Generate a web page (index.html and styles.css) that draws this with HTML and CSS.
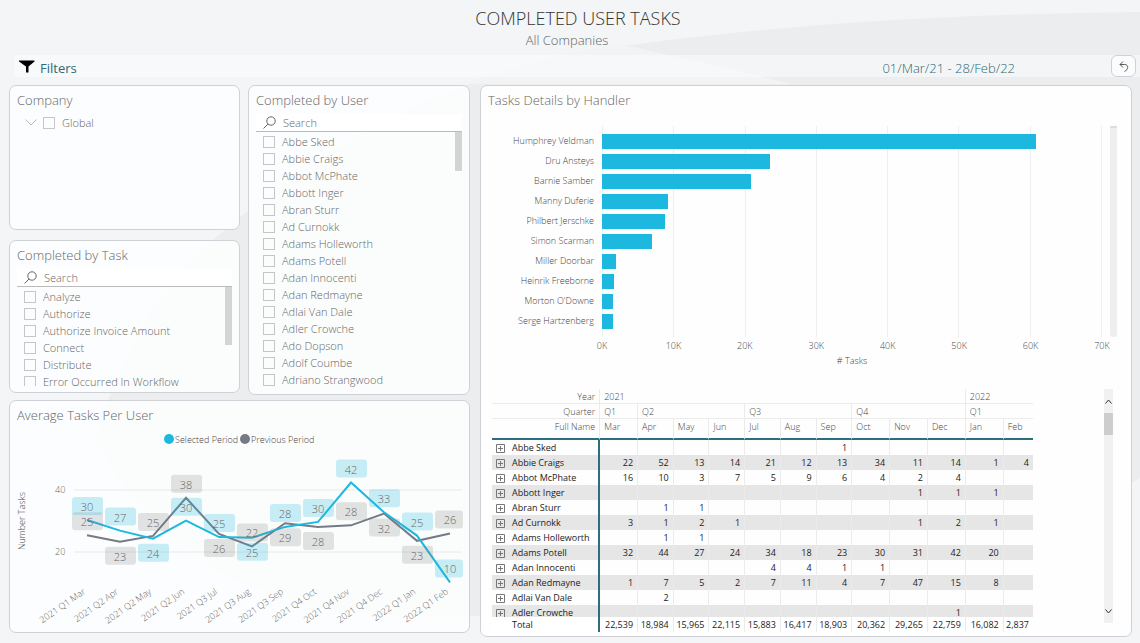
FILE: index.html
```html
<!DOCTYPE html>
<html lang="en">
	<head>
		<meta charset="utf-8">
		<title>Completed User Tasks</title>
		<link rel="stylesheet" href="styles.css">
		<script src="script.js" defer></script>
	</head>
	<body>
		<svg class="backdrop" viewBox="0 0 1140 643" preserveAspectRatio="none" aria-hidden="true">
			<path fill="#ecedef" d="M95 440C130 330 165 285 213 240C300 165 400 95 570 54C760 24 950 14 1140 12V478C1000 560 700 612 470 616C330 622 180 600 95 440Z"/>
			<path fill="#f2f3f5" d="M470 84C520 62 570 52 620 44C680 58 740 70 790 84Z"/>
		</svg>
		<header>
			<h1>COMPLETED USER TASKS</h1>
			<p class="subtitle">All Companies</p>
		</header>
		<div class="toolbar">
			<a class="filters" href="#filters">
				<svg width="16" height="14" viewBox="0 0 16 14" aria-hidden="true"><path d="M0 0.5H15.5V1.5L9.5 6.5V12.5H7V6.5L0 1.5Z"/></svg>
				Filters
			</a>
			<span class="period">01/Mar/21 - 28/Feb/22</span>
			<button class="reset" aria-label="Reset">
				<svg width="10" height="11" viewBox="0 0 10 11" aria-hidden="true"><path d="M4 0.5L1 3.5L4 6.5M1 3.5H5.5C10 3.5 9.5 9 5.5 10.3"/></svg>
			</button>
		</div>
		<main>
			<div class="left">
				<div class="slicers">
					<div class="stack">
						<section class="card company">
							<h2>Company</h2>
							<div class="tree">
								<button class="expand" aria-label="Collapse Global">
									<svg width="12" height="7" viewBox="0 0 12 7" aria-hidden="true"><path d="M0.5 0.5L6 6L11.5 0.5"/></svg>
								</button>
								<label><input type="checkbox"> Global</label>
							</div>
						</section>
						<section class="card task">
							<h2>Completed by Task</h2>
							<div class="search">
								<svg width="13" height="13" viewBox="0 0 13 13" aria-hidden="true"><circle cx="8" cy="5" r="4.2"/><path d="M5 8L0.5 12.5"/></svg>
								<input type="text" placeholder="Search" aria-label="Search tasks">
							</div>
							<div class="scroller">
								<ul class="options" id="tasks"></ul>
								<span class="thumb"></span>
							</div>
						</section>
					</div>
					<section class="card user">
						<h2>Completed by User</h2>
						<div class="search">
							<svg width="13" height="13" viewBox="0 0 13 13" aria-hidden="true"><circle cx="8" cy="5" r="4.2"/><path d="M5 8L0.5 12.5"/></svg>
							<input type="text" placeholder="Search" aria-label="Search users">
						</div>
						<div class="scroller">
							<ul class="options" id="users"></ul>
							<span class="thumb"></span>
						</div>
					</section>
				</div>
				<section class="card">
					<h2>Average Tasks Per User</h2>
					<svg class="linechart" id="average" viewBox="0 0 445 202" role="img" aria-label="Average tasks per user">
						<circle class="dot-selected" cx="152" cy="15" r="5"/>
						<text class="legend" x="158" y="19">Selected Period</text>
						<circle class="dot-previous" cx="228" cy="15" r="5"/>
						<text class="legend" x="234" y="19">Previous Period</text>
						<text class="legend" text-anchor="middle" transform="translate(8 97) rotate(-90)">Number Tasks</text>
					</svg>
				</section>
			</div>
			<section class="card details">
				<h2>Tasks Details by Handler</h2>
				<div class="barchart">
					<ul class="names" id="handlers"></ul>
					<ul class="plot" id="bars"></ul>
					<div class="track"></div>
					<div class="axis" id="axis"></div>
					<div class="axis-title"># Tasks</div>
				</div>
				<div class="matrix-row">
					<div class="matrix">
						<table>
							<colgroup id="cols"></colgroup>
							<thead>
								<tr>
									<th class="head">Year</th>
									<th colspan="10">2021</th>
									<th colspan="2">2022</th>
								</tr>
								<tr>
									<th class="head">Quarter</th>
									<th>Q1</th>
									<th colspan="3">Q2</th>
									<th colspan="3">Q3</th>
									<th colspan="3">Q4</th>
									<th colspan="2">Q1</th>
								</tr>
								<tr class="months" id="months">
									<th class="head">Full Name</th>
								</tr>
							</thead>
							<tbody id="rows"></tbody>
							<tfoot>
								<tr id="total"></tr>
							</tfoot>
						</table>
					</div>
					<div class="scrollbar">
						<button aria-label="Scroll up"><svg width="7" height="5" viewBox="0 0 7 5"><path d="M0.5 4.5L3.5 1L6.5 4.5"/></svg></button>
						<span class="grip"></span>
						<button aria-label="Scroll down"><svg width="7" height="5" viewBox="0 0 7 5"><path d="M0.5 0.5L3.5 4L6.5 0.5"/></svg></button>
					</div>
				</div>
			</section>
		</main>
	</body>
</html>
```
FILE: styles.css
```css
* {
	box-sizing: border-box;
}
body {
	margin: 0;
	background: #f3f5f7;
	color: #666;
	font: 300 11px/17px "Open Sans", "Noto Sans", sans-serif;
}
h1, h2, p, ul {
	margin: 0;
	padding: 0;
	font-weight: 300;
}
ul {
	list-style: none;
}
button {
	padding: 0;
	border: 0;
	background: none;
}
svg {
	display: block;
}
.backdrop {
	position: absolute;
	z-index: -1;
	width: 100%;
	height: 100%;
}

header {
	padding-top: 6px;
	text-align: center;
}
h1 {
	padding-left: 16px;
	color: #333;
	font-size: 18px;
	line-height: 24px;
}
.subtitle {
	padding-right: 6px;
	font-size: 13px;
	line-height: 21px;
}
.toolbar {
	display: flex;
	align-items: center;
	height: 22px;
	margin: 4px 0 8px 14px;
	padding: 0 4px 0 5px;
	background: rgba(252, 253, 253, 0.5);
	font-size: 13px;
}
.filters {
	display: flex;
	gap: 5px;
	flex: 1;
	padding-top: 4px;
	color: #2c6a77;
	font-weight: 400;
	text-decoration: none;
}
.filters svg {
	fill: #000;
}
.period {
	padding-top: 4px;
	color: #2c6a77;
}
.reset {
	display: grid;
	place-items: center;
	width: 25px;
	height: 22px;
	margin-left: 96px;
	border: 1px solid #cfd1d6;
	border-radius: 6px;
	background: #fbfcfc;
}
.reset svg {
	fill: none;
	stroke: #555;
}

main {
	display: grid;
	grid-template-columns: 461fr 652fr;
	gap: 10px;
	padding: 0 8px 7px 9px;
	align-items: start;
}
.left {
	display: grid;
	gap: 5px;
}
.slicers {
	display: grid;
	grid-template-columns: 231fr 222fr;
	gap: 8px;
	align-items: start;
}
.stack {
	display: grid;
	gap: 10px;
}
.card {
	min-width: 0;
	padding: 6px 7px;
	border: 1px solid #cfd1d6;
	border-radius: 7px;
	background: rgba(253, 254, 254, 0.9);
}
h2 {
	font-size: 13px;
	line-height: 17px;
}
.company {
	min-height: 145px;
}
.tree {
	display: flex;
	align-items: center;
	gap: 6px;
	padding: 5px 8px;
}
.expand svg {
	fill: none;
	stroke: #bbb;
}
.search {
	display: flex;
	align-items: center;
	gap: 7px;
	height: 18px;
	margin-top: 5px;
	padding-left: 7px;
	border-bottom: 1px solid #bbb;
	background: #fff;
}
.search svg {
	fill: none;
	stroke: #666;
}
.search input {
	flex: 1;
	min-width: 0;
	padding: 0;
	border: 0;
	background: none;
	font: inherit;
}
.search input::placeholder {
	color: #666;
}
.scroller {
	display: flex;
	overflow: hidden;
}
.task .scroller {
	height: 99px;
}
.options {
	flex: 1;
	padding: 1px 0 0 7px;
}
label {
	display: flex;
	align-items: center;
	gap: 7px;
	height: 17px;
	white-space: nowrap;
}
input[type=checkbox] {
	appearance: none;
	width: 12px;
	height: 12px;
	margin: 0;
	border: 1px solid #c6c6c9;
}
.thumb {
	width: 7px;
	height: 39px;
	background: #d4d4d4;
}
.task .thumb {
	height: 58px;
}

.linechart {
	width: 100%;
	overflow: visible;
}
.linechart text {
	fill: #666;
}
.linechart .legend {
	fill: #444;
	font-size: 9px;
}
.linechart .tick {
	font-size: 9px;
}
.linechart .value {
	font-size: 11px;
	text-anchor: middle;
}
.linechart line {
	stroke: #e8eaea;
}
.linechart polyline {
	fill: none;
	stroke-width: 2;
}
.dot-selected {
	fill: #1cb8df;
}
.dot-previous {
	fill: #767a84;
}
.line-selected {
	stroke: #1cb8df;
}
.line-previous {
	stroke: #767a84;
}
.box-selected {
	fill: rgba(28, 184, 223, 0.24);
}
.box-previous {
	fill: rgba(120, 120, 120, 0.2);
}

.details {
	padding-bottom: 4px;
	background: #fefefe;
}
.barchart {
	display: grid;
	grid-template-columns: 106px 1fr 7px;
	column-gap: 8px;
	margin: 17px 7px 0 0;
	color: #444;
	font-size: 9px;
}
.names, .plot {
	padding: 5px 0 6px;
}
.names li {
	height: 20px;
	line-height: 20px;
	text-align: right;
}
.plot {
	border-right: 1px solid #eee;
	background: repeating-linear-gradient(to right, #eee 0 1px, transparent 1px calc(100% / 7));
}
.plot li {
	display: flex;
	align-items: center;
	height: 20px;
}
.bar {
	height: 15px;
	background: #1cb8df;
}
.track {
	border-top: 2px solid #ddd;
	border-radius: 0 0 3px 3px;
	background: #eee;
}
.axis {
	grid-column: 2;
	display: flex;
	justify-content: space-between;
}
.axis span {
	display: flex;
	justify-content: center;
	width: 0;
}
.axis-title {
	grid-column: 2;
	line-height: 13px;
	text-align: center;
}

.matrix-row {
	display: flex;
	gap: 71px;
	margin: 22px 11px 0 4px;
}
.matrix {
	flex: 1;
	height: 243px;
	overflow: hidden;
}
table {
	width: 100%;
	border-spacing: 0;
	table-layout: fixed;
	color: #222;
	font-size: 9px;
	font-weight: 400;
	line-height: 13px;
}
.col-name {
	width: 20%;
}
.col-wide {
	width: 7%;
}
.col-month {
	width: 6.6%;
}
th, td {
	height: 15px;
	padding: 0 4px;
	border-right: 1px solid #ebebeb;
	font-weight: 400;
	white-space: nowrap;
}
th {
	text-align: left;
}
td {
	text-align: right;
}
th:last-child, td:last-child {
	border-right: 0;
}
thead th {
	height: 15px;
	border-bottom: 1px solid #ebebeb;
	color: #444;
	font-weight: 300;
}
thead .head {
	text-align: right;
}
.months th {
	height: 21px;
	padding-bottom: 4px;
	border-bottom: 2px solid #2b6f7e;
}
tbody tr:nth-child(even) {
	background: #e6e6e6;
}
tbody th, tfoot th {
	border-right: 2px solid #2b6f7e;
}
tbody th button {
	width: 9px;
	height: 9px;
	margin-right: 7px;
	vertical-align: middle;
}
tbody th button svg {
	fill: none;
	stroke: #777;
}
tfoot th, tfoot td {
	position: sticky;
	bottom: 0;
	background: #fff;
}
tfoot th {
	padding-left: 20px;
}
tfoot td {
	padding-left: 0;
}
.scrollbar {
	display: flex;
	flex-direction: column;
	width: 9px;
	height: 234px;
	background: #f1f1f1;
}
.scrollbar button {
	display: grid;
	place-items: center;
	height: 24px;
}
.scrollbar svg {
	fill: none;
	stroke: #333;
}
.grip {
	height: 22px;
	margin-bottom: auto;
	background: #cdcdcd;
}
```
FILE: script.js
```js
const tasks = ['Analyze', 'Authorize', 'Authorize Invoice Amount', 'Connect', 'Distribute', 'Error Occurred In Workflow']
const users = ['Abbe Sked', 'Abbie Craigs', 'Abbot McPhate', 'Abbott Inger', 'Abran Sturr', 'Ad Curnokk',
	'Adams Holleworth', 'Adams Potell', 'Adan Innocenti', 'Adan Redmayne', 'Adlai Van Dale', 'Adler Crowche',
	'Ado Dopson', 'Adolf Coumbe', 'Adriano Strangwood']
const handlers = [
	['Humphrey Veldman', 60900], ['Dru Ansteys', 23600], ['Barnie Samber', 20950], ['Manny Duferie', 9300],
	['Philbert Jerschke', 8850], ['Simon Scarman', 6950], ['Miller Doorbar', 1900], ['Heinrik Freeborne', 1700],
	['Morton O\'Downe', 1600], ['Serge Hartzenberg', 1600]
]
const months = ['Mar', 'Apr', 'May', 'Jun', 'Jul', 'Aug', 'Sep', 'Oct', 'Nov', 'Dec', 'Jan', 'Feb']
const quarters = ['2021 Q1', '2021 Q2', '2021 Q2', '2021 Q2', '2021 Q3', '2021 Q3', '2021 Q3', '2021 Q4', '2021 Q4', '2021 Q4', '2022 Q1', '2022 Q1']
// one row per user, months in order
const matrix = [
	',,,,,,1,,,,,',
	'22,52,13,14,21,12,13,34,11,14,1,4',
	'16,10,3,7,5,9,6,4,2,4,,',
	',,,,,,,,1,1,1,',
	',1,1,,,,,,,,,',
	'3,1,2,1,,,,,1,2,1,',
	',1,1,,,,,,,,,',
	'32,44,27,24,34,18,23,30,31,42,20,',
	',,,,4,4,1,1,,,,',
	'1,7,5,2,7,11,4,7,47,15,8,',
	',2,,,,,,,,,,',
	',,,,,,,,,1,,'
]
const totals = ['22,539', '18,984', '15,965', '22,115', '15,883', '16,417', '18,903', '20,362', '29,265', '22,759', '16,082', '2,837']
// side: -1 puts the label above the point, 1 below
const series = [
	{
		name: 'previous',
		values: [25.4, 23.3, 25.2, 37.5, 25.8, 21.8, 29.3, 28.1, 28.6, 32.4, 23.6, 26],
		labels: [25, 23, 25, 38, 26, 22, 29, 28, 28, 32, 23, 26],
		side: [-1, 1, -1, -1, 1, -1, 1, 1, -1, 1, 1, -1]
	},
	{
		name: 'selected',
		values: [30.3, 26.9, 24.3, 30.1, 24.8, 24.6, 28.1, 29.7, 42.4, 32.8, 25.3, 10.2],
		labels: [30, 27, 24, 30, 25, 25, 28, 30, 42, 33, 25, 10],
		side: [-1, -1, 1, -1, -1, 1, -1, -1, -1, -1, -1, -1]
	}
]

const get = id => document.getElementById(id)
const option = name => `<li><label><input type="checkbox"> ${name}</label></li>`
get('tasks').innerHTML = tasks.map(option).join('')
get('users').innerHTML = users.map(option).join('')

get('handlers').innerHTML = handlers.map(h => `<li>${h[0]}</li>`).join('')
get('bars').innerHTML = handlers.map(h => `<li><div class="bar" style="width:${h[1] / 700}%"></div></li>`).join('')
for(let i = 0; i <= 70; i += 10)
	get('axis').innerHTML += `<span>${i}K</span>`

const widths = ['name', 'wide', 'month', 'month', 'month', 'month', 'month', 'month', 'wide', 'wide', 'wide', 'wide', 'last']
get('cols').innerHTML = widths.map(w => `<col class="col-${w}">`).join('')
get('months').innerHTML += months.map(m => `<th>${m}</th>`).join('')
const plus = '<svg width="9" height="9" viewBox="0 0 9 9"><path d="M0.5 0.5H8.5V8.5H0.5ZM2 4.5H7M4.5 2V7"/></svg>'
get('rows').innerHTML = matrix.map((row, i) => {
	const cells = row.split(',').map(v => `<td>${v}</td>`).join('')
	return `<tr><th><button aria-label="Expand ${users[i]}">${plus}</button>${users[i]}</th>${cells}</tr>`
}).join('')
get('total').innerHTML = '<th>Total</th>' + totals.map(t => `<td>${t}</td>`).join('')

const px = i => 70 + i * 33
const py = v => 66 + (40 - v) * 3.1
let chart = ''
for(let v of [40, 20])
	chart += `<line x1="57" x2="445" y1="${py(v)}" y2="${py(v)}"/><text class="tick" x="38" y="${py(v) + 3}">${v}</text>`
for(let s of series)
	chart += `<polyline class="line-${s.name}" points="${s.values.map((v, i) => px(i) + ',' + py(v)).join(' ')}"/>`
for(let s of series) {
	s.values.forEach((v, i) => {
		const y = py(v) + s.side[i] * 14
		const right = Math.min(px(i) + 16, 446)
		chart += `<rect class="box-${s.name}" x="${px(i) - 15}" y="${y - 9}" width="${right - px(i) + 15}" height="18" rx="3"/>`
		chart += `<text class="value" x="${px(i)}" y="${y + 5}">${s.labels[i]}</text>`
	})
}
months.forEach((m, i) => {
	chart += `<text class="tick" text-anchor="end" transform="translate(${px(i) - 1} 169) rotate(-35)">${quarters[i]} ${m}</text>`
})
get('average').innerHTML += chart
```
